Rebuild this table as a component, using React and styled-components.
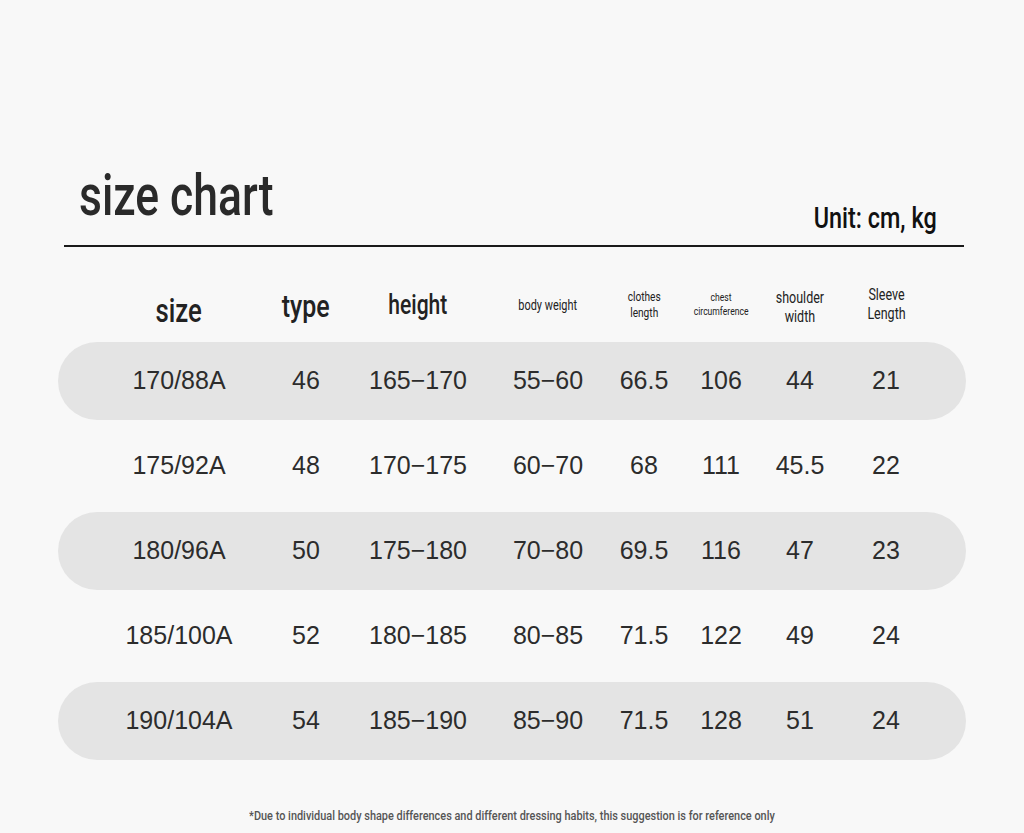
import styled, { createGlobalStyle } from "styled-components";

const GlobalStyle = createGlobalStyle`
  html, body {
    margin: 0;
    padding: 0;
    background: #f8f8f8;
  }
  body {
    font-family: "Liberation Sans", Arial, sans-serif;
  }
`

// widths picked so every column centre lands on the reference
const COLUMNS = "162px 92px 132px 128px 64px 90px 68px 104px";

const Page = styled.div`
  width: 1024px;
  height: 833px;
  padding-top: 167px;
  box-sizing: border-box;
  display: flex;
  flex-direction: column;
  align-items: center;
  overflow: hidden;
`
const Heading = styled.div`
  width: 900px;
  margin-left: 4px;
  display: flex;
  justify-content: space-between;
  align-items: flex-end;
  padding: 0 27px 12px 15px;
  box-sizing: border-box;
  border-bottom: 2px solid #1a1a1a;
`
const Cond = styled.span`
  display: inline-block;
  font-family: Roboto, "Liberation Sans", sans-serif;
  white-space: nowrap;
  transform: scaleX(${(props) => props.$scale || 0.78});
  transform-origin: ${(props) => props.$origin || "center"};
`
const Title = styled(Cond)`
  font-size: 57px;
  line-height: 1;
  font-weight: 500;
  color: #2a2a2a;
  margin-bottom: 9px;
`
const Unit = styled(Cond)`
  font-size: 30px;
  line-height: 1;
  font-weight: 500;
  color: #111;
`
const Table = styled.div`
  width: 908px;
  margin-top: 28px;
  display: flex;
  flex-direction: column;
  gap: 7px;
`
const HeaderRow = styled.div`
  display: grid;
  grid-template-columns: ${COLUMNS};
  padding-left: 40px;
  height: 60px;
`
const HeaderCell = styled.div`
  display: flex;
  align-items: center;
  justify-content: center;
  transform: translateY(${(props) => props.$dy || 0}px);
`
const HeaderText = styled(Cond)`
  font-size: ${(props) => props.$size}px;
  line-height: ${(props) => props.$lh || 1};
  font-weight: ${(props) => props.$weight || 400};
  color: #222;
  text-align: center;
`
const Row = styled.div`
  display: grid;
  grid-template-columns: ${COLUMNS};
  padding-left: 40px;
  height: 78px;
  border-radius: 39px;
  background: ${(props) => props.$shaded ? "#e4e4e4" : "transparent"};
`
const Cell = styled.div`
  display: flex;
  align-items: center;
  justify-content: center;
  white-space: nowrap;
  font-size: 25px;
  color: #2c2c2c;
  transform: translateY(-1px);
`
const Footnote = styled(Cond)`
  margin-top: auto;
  margin-bottom: 10px;
  font-size: 13px;
  font-weight: 500;
  color: #555;
`

const headers = [
  { lines: ["size"], size: 33, weight: 500, dy: 5 },
  { lines: ["type"], size: 32, weight: 500, dy: 1 },
  { lines: ["height"], size: 27, weight: 500 },
  { lines: ["body weight"], size: 14 },
  { lines: ["clothes", "length"], size: 13, lh: "16px" },
  { lines: ["chest", "circumference"], size: 11, lh: "14px" },
  { lines: ["shoulder", "width"], size: 16, lh: "19px", dy: 2 },
  { lines: ["Sleeve", "Length"], size: 16, lh: "19px", dy: -1 },
];

const rows = [
  ["170/88A", "46", "165−170", "55−60", "66.5", "106", "44", "21"],
  ["175/92A", "48", "170−175", "60−70", "68", "111", "45.5", "22"],
  ["180/96A", "50", "175−180", "70−80", "69.5", "116", "47", "23"],
  ["185/100A", "52", "180−185", "80−85", "71.5", "122", "49", "24"],
  ["190/104A", "54", "185−190", "85−90", "71.5", "128", "51", "24"],
];

export default function App() {
  return (
    <>
      <GlobalStyle />
      <Page>
        <Heading>
          <Title $origin="left">size chart</Title>
          <Unit $origin="right">Unit: cm, kg</Unit>
        </Heading>
        <Table>
          <HeaderRow>
            {headers.map((h, idx) => (
              <HeaderCell key={idx} $dy={h.dy}>
                <HeaderText $size={h.size} $lh={h.lh} $weight={h.weight}>
                  {h.lines.map((line, i) => (
                    <div key={i}>{line}</div>
                  ))}
                </HeaderText>
              </HeaderCell>
            ))}
          </HeaderRow>
          {rows.map((row, idx) => (
            <Row key={idx} $shaded={idx % 2 === 0}>
              {row.map((value, i) => (
                <Cell key={i}>{value}</Cell>
              ))}
            </Row>
          ))}
        </Table>
        <Footnote $scale={0.84}>
          *Due to individual body shape differences and different dressing habits, this suggestion is for reference only
        </Footnote>
      </Page>
    </>
  );
}
